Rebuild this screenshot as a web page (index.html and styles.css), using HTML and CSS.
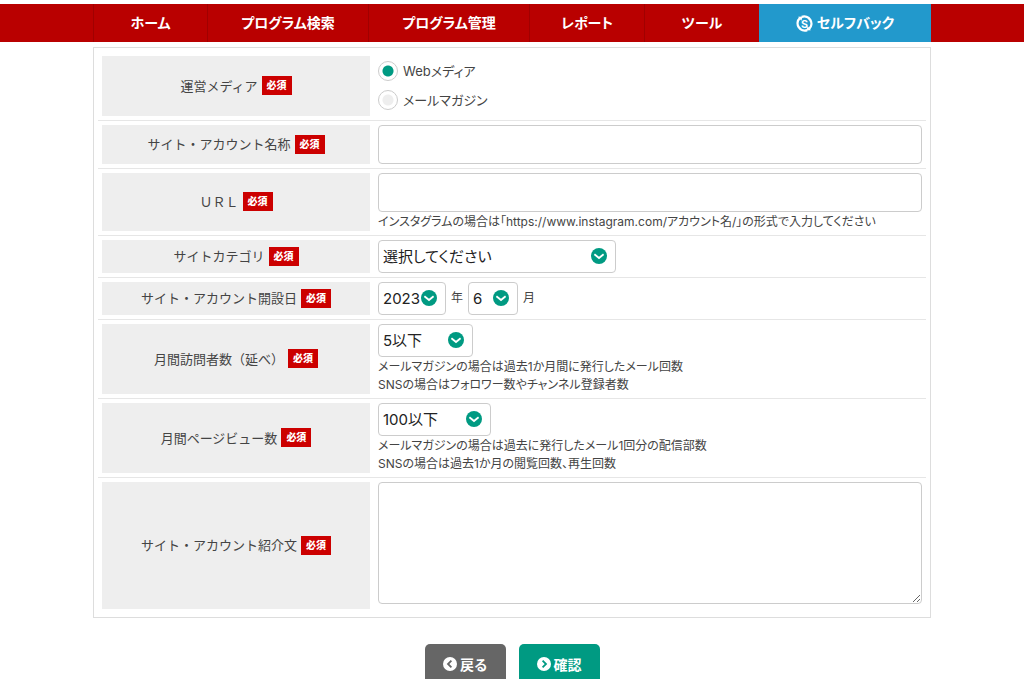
FILE: index.html
```html
<!DOCTYPE html>
<html lang="ja">
<head>
<meta charset="utf-8">
<meta name="viewport" content="width=device-width, initial-scale=1">
<title>サイト登録</title>
<link rel="stylesheet" href="styles.css">
</head>
<body>
<svg class="sprite" aria-hidden="true">
  <symbol id="chevron" viewBox="0 0 16 16">
    <circle cx="8" cy="8" r="8" fill="#009a82"/>
    <path d="M3.4 6.2 8 10 12.6 6.2" fill="none" stroke="#fff" stroke-width="1.8"/>
  </symbol>
</svg>

<nav class="nav">
  <div class="nav-inner">
    <a class="nav-item" href="#">ホーム</a>
    <a class="nav-item" href="#">プログラム検索</a>
    <a class="nav-item" href="#">プログラム管理</a>
    <a class="nav-item" href="#">レポート</a>
    <a class="nav-item" href="#">ツール</a>
    <a class="nav-item nav-item-self" href="#">
      <svg class="nav-icon" viewBox="0 0 16 16" aria-hidden="true">
        <path d="M3.6 3A6.8 6.8 0 0 0 10.6 14.3M12.4 13A6.8 6.8 0 0 0 5.4 1.7" fill="none" stroke="#fff" stroke-width="2.2"/>
        <path d="M2 1.6 6.4 1.4 5 5.4zM14 14.4 9.6 14.6 11 10.6z" fill="#fff"/>
        <text class="nav-icon-letter" x="8" y="11.8" text-anchor="middle">S</text>
      </svg>
      セルフバック
    </a>
  </div>
</nav>

<form class="page">
  <div class="panel">
    <div class="row" role="radiogroup" aria-labelledby="media-label">
      <div class="head"><span id="media-label">運営メディア</span><span class="badge">必須</span></div>
      <div class="body body-choices">
        <label class="choice"><input class="radio" type="radio" name="media" checked>Webメディア</label>
        <label class="choice"><input class="radio" type="radio" name="media">メールマガジン</label>
      </div>
    </div>
    <div class="row">
      <div class="head"><label for="site">サイト・アカウント名称</label><span class="badge">必須</span></div>
      <div class="body"><input class="field" id="site" type="text"></div>
    </div>
    <div class="row">
      <div class="head"><label for="url">ＵＲＬ</label><span class="badge">必須</span></div>
      <div class="body">
        <input class="field" id="url" type="text">
        <p class="note">インスタグラムの場合は「https://www.instagram.com/アカウント名/」の形式で入力してください</p>
      </div>
    </div>
    <div class="row">
      <div class="head"><label for="category">サイトカテゴリ</label><span class="badge">必須</span></div>
      <div class="body">
        <span class="picker picker-category"><select class="select" id="category"><option>選択してください</option></select><svg class="arrow" aria-hidden="true"><use href="#chevron"/></svg></span>
      </div>
    </div>
    <div class="row">
      <div class="head"><span>サイト・アカウント開設日</span><span class="badge">必須</span></div>
      <div class="body body-date">
        <span class="picker picker-year"><select class="select" id="year"><option>2023</option></select><svg class="arrow" aria-hidden="true"><use href="#chevron"/></svg></span>
        <label class="unit" for="year">年</label>
        <span class="picker picker-month"><select class="select" id="month"><option>6</option></select><svg class="arrow" aria-hidden="true"><use href="#chevron"/></svg></span>
        <label class="unit" for="month">月</label>
      </div>
    </div>
    <div class="row">
      <div class="head"><label for="visits">月間訪問者数（延べ）</label><span class="badge">必須</span></div>
      <div class="body">
        <span class="picker picker-visits"><select class="select" id="visits"><option>5以下</option></select><svg class="arrow" aria-hidden="true"><use href="#chevron"/></svg></span>
        <p class="note">メールマガジンの場合は過去1か月間に発行したメール回数<br>SNSの場合はフォロワー数やチャンネル登録者数</p>
      </div>
    </div>
    <div class="row">
      <div class="head"><label for="views">月間ページビュー数</label><span class="badge">必須</span></div>
      <div class="body">
        <span class="picker picker-views"><select class="select" id="views"><option>100以下</option></select><svg class="arrow" aria-hidden="true"><use href="#chevron"/></svg></span>
        <p class="note">メールマガジンの場合は過去に発行したメール1回分の配信部数<br>SNSの場合は過去1か月の閲覧回数、再生回数</p>
      </div>
    </div>
    <div class="row">
      <div class="head"><label for="intro">サイト・アカウント紹介文</label><span class="badge">必須</span></div>
      <div class="body"><textarea class="field field-area" id="intro"></textarea></div>
    </div>
  </div>

  <div class="actions">
    <button class="button button-back" type="button">
      <svg class="button-icon" viewBox="0 0 14 14" aria-hidden="true"><circle cx="7" cy="7" r="7" fill="#fff"/><path d="M8.4 3.6 5 7l3.4 3.4" fill="none" stroke="#666" stroke-width="1.8"/></svg>戻る
    </button>
    <button class="button button-next" type="button">
      <svg class="button-icon" viewBox="0 0 14 14" aria-hidden="true"><circle cx="7" cy="7" r="7" fill="#fff"/><path d="M5.6 3.6 9 7l-3.4 3.4" fill="none" stroke="#009a82" stroke-width="1.8"/></svg>確認
    </button>
  </div>
</form>
</body>
</html>
```

FILE: styles.css
```css
* {
  box-sizing: border-box;
}

body {
  margin: 0;
  padding-top: 4px;
  background: #fff;
  color: #444;
  font-family: Inter, "Noto Sans CJK JP", sans-serif;
  font-size: 13px;
  line-height: 18px;
}

.sprite {
  display: none;
}

.nav {
  background: #b90000;
}

.nav-inner {
  display: grid;
  grid-template-columns: 114fr 161fr 161fr 115fr 115fr 172fr;
  max-width: 838px;
  margin: 0 auto;
}

.nav-item {
  display: flex;
  align-items: center;
  justify-content: center;
  gap: 4px;
  height: 38px;
  border-left: 1px solid #a00000;
  color: #fff;
  font-size: 14px;
  font-weight: 700;
  font-feature-settings: "palt";
  text-decoration: none;
}

.nav-item-self {
  border-left: 0;
  background: #2299cc;
}

.nav-icon {
  width: 17px;
  height: 17px;
}

.nav-icon-letter {
  fill: #fff;
  font-size: 10px;
  font-weight: 700;
}

.page {
  max-width: 838px;
  margin: 5px auto 0;
}

.panel {
  padding: 4px;
  border: 1px solid #ddd;
}

.row {
  display: grid;
  grid-template-columns: 268fr 544fr;
  column-gap: 8px;
  padding: 4px;
}

.row + .row {
  border-top: 1px solid #e6e6e6;
}

.head {
  display: flex;
  align-items: center;
  justify-content: center;
  gap: 4px;
  padding-bottom: 1px;
  background: #eee;
}

.badge {
  padding: 0 5px;
  background: #c00;
  color: #fff;
  font-size: 10px;
  font-weight: 900;
  line-height: 19px;
}

.body-choices {
  padding-bottom: 2px;
}

.choice {
  display: flex;
  align-items: center;
  gap: 5px;
  height: 29px;
  font-feature-settings: "palt";
}

.radio {
  appearance: none;
  width: 20px;
  height: 20px;
  margin: 0;
  border: 1px solid #ccc;
  border-radius: 50%;
  background: radial-gradient(circle, #eee 5px, #fff 6px);
}

.radio:checked {
  background: radial-gradient(circle, #009a82 5px, #fff 6px);
}

.field {
  display: block;
  width: 100%;
  height: 39px;
  margin: 0;
  padding: 8px;
  border: 1px solid #ccc;
  border-radius: 4px;
  background: #fff;
  font: inherit;
}

.field-area {
  height: 122px;
  margin-bottom: 5px;
}

.note {
  margin: 0;
  padding-top: 1px;
  font-size: 12px;
  font-feature-settings: "palt";
}

.picker {
  position: relative;
  display: block;
}

.picker-category {
  width: 238px;
}

.picker-year {
  width: 68px;
}

.picker-month {
  width: 50px;
}

.picker-visits {
  width: 95px;
}

.picker-views {
  width: 113px;
}

.select {
  appearance: none;
  display: block;
  width: 100%;
  height: 33px;
  padding: 0 4px;
  border: 1px solid #ccc;
  border-radius: 4px;
  background: #fff;
  color: #222;
  font-family: inherit;
  font-size: 15px;
  font-feature-settings: "palt";
}

.arrow {
  position: absolute;
  top: 8px;
  right: 9px;
  width: 16px;
  height: 16px;
  pointer-events: none;
}

.body-date {
  display: flex;
  gap: 5px;
}

.unit {
  line-height: 31px;
  font-size: 12px;
}

.actions {
  display: flex;
  justify-content: center;
  gap: 13px;
  margin-top: 26px;
}

.button {
  display: flex;
  align-items: center;
  justify-content: center;
  gap: 3px;
  width: 81px;
  height: 35px;
  padding: 4px 0 0;
  border: 0;
  border-radius: 5px 5px 0 0;
  color: #fff;
  font-family: inherit;
  font-size: 14px;
  font-weight: 700;
  font-feature-settings: "palt";
}

.button-back {
  background: #666;
}

.button-next {
  background: #009a82;
}

.button-icon {
  width: 14px;
  height: 14px;
}
```
